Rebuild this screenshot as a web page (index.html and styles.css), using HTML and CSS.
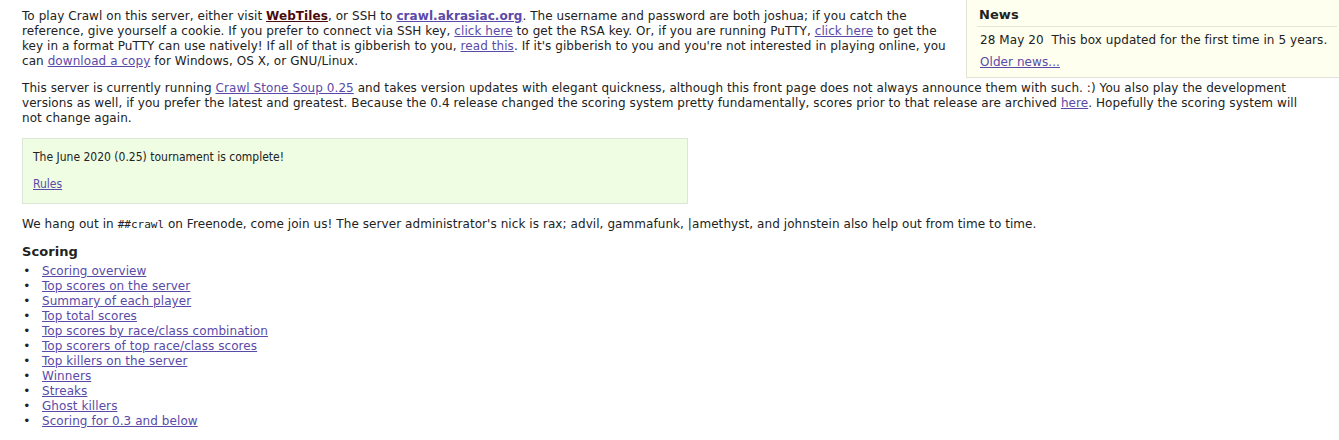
FILE: index.html
```html
<!DOCTYPE html>
<html lang="en">
<head>
    <meta charset="UTF-8">
    <title>crawl.akrasiac.org</title>
    <link rel="stylesheet" href="styles.css">
</head>
<body>
    <!-- News box, floated top right -->
    <div class="news">
        <h3>News</h3>
        <p class="news-item">28 May 20&nbsp; This box updated for the first time in 5 years.</p>
        <p class="news-more"><a href="#">Older news...</a></p>
    </div>

    <div class="content">
        <p>To play Crawl on this server, either visit <a href="#" class="strong visited">WebTiles</a>, or SSH to <a href="#" class="strong">crawl.akrasiac.org</a>. The username and password are both joshua; if you catch the reference, give yourself a cookie. If you prefer to connect via SSH key, <a href="#">click here</a> to get the RSA key. Or, if you are running PuTTY, <a href="#">click here</a> to get the key in a format PuTTY can use natively! If all of that is gibberish to you, <a href="#">read this</a>. If it's gibberish to you and you're not interested in playing online, you can <a href="#">download a copy</a> for Windows, OS X, or GNU/Linux.</p>

        <p>This server is currently running <a href="#">Crawl Stone Soup 0.25</a> and takes version updates with elegant quickness, although this front page does not always announce them with such. :) You also play the development versions as well, if you prefer the latest and greatest. Because the 0.4 release changed the scoring system pretty fundamentally, scores prior to that release are archived <a href="#">here</a>. Hopefully the scoring system will not change again.</p>

        <div class="tourney">
            <p>The June 2020 (0.25) tournament is complete!</p>
            <p><a href="#">Rules</a></p>
        </div>

        <p>We hang out in <code>##crawl</code> on Freenode, come join us! The server administrator's nick is rax; advil, gammafunk, |amethyst, and johnstein also help out from time to time.</p>

        <h3 class="section">Scoring</h3>
        <ul class="links">
            <li><a href="#">Scoring overview</a></li>
            <li><a href="#">Top scores on the server</a></li>
            <li><a href="#">Summary of each player</a></li>
            <li><a href="#">Top total scores</a></li>
            <li><a href="#">Top scores by race/class combination</a></li>
            <li><a href="#">Top scorers of top race/class scores</a></li>
            <li><a href="#">Top killers on the server</a></li>
            <li><a href="#">Winners</a></li>
            <li><a href="#">Streaks</a></li>
            <li><a href="#">Ghost killers</a></li>
            <li><a href="#">Scoring for 0.3 and below</a></li>
        </ul>
    </div>
</body>
</html>
```

FILE: styles.css
```css
body {
    font-family: "DejaVu Sans", Verdana, sans-serif;
    font-size: 12px;
    line-height: 15px;
    letter-spacing: 0.07px;
    color: #222;
    background: #ffffff;
    margin: 0;
    padding: 0;
}
a {
    color: #5a4aa8;
}
a.strong {
    font-weight: bold;
}
a.visited {
    color: #4b0a0a;
}
p {
    margin: 0 0 12px 0;
}
.content {
    padding: 9px 22px 0 22px;
}
.news {
    float: right;
    width: 362px;
    padding: 0 0 7px 10px;
    margin: 0 0 0 12px;
    background: #fffff0;
    border-left: 1px solid #e2e2d6;
    border-bottom: 1px solid #e2e2d6;
}
.news h3 {
    font-size: 13px;
    line-height: 16px;
    margin: 0 2px 0 0;
    padding: 7px 2px 3px 2px;
    border-bottom: 1px solid #e6e6d8;
}
.news .news-item {
    margin: 6px 0 7px 3px;
}
.news .news-more {
    margin: 0 0 0 3px;
}
.tourney {
    width: 644px;
    padding: 11px 10px 11px 10px;
    margin-bottom: 13px;
    background: #effde3;
    border: 1px solid #dde5d8;
    font-family: "DejaVu Sans Condensed", "DejaVu Sans", sans-serif;
    font-stretch: condensed;
    letter-spacing: 0;
}
.tourney p {
    margin: 0;
}
.tourney p + p {
    margin-top: 12px;
}
code {
    font-family: "DejaVu Sans Mono", monospace;
    font-size: 11px;
    letter-spacing: 0;
}
h3.section {
    font-size: 13px;
    line-height: 16px;
    margin: 0 0 4px 0;
}
ul.links {
    margin: 0;
    padding-left: 20px;
}
ul.links li::marker {
    content: "\2022\00a0\00a0\00a0";
}
```
